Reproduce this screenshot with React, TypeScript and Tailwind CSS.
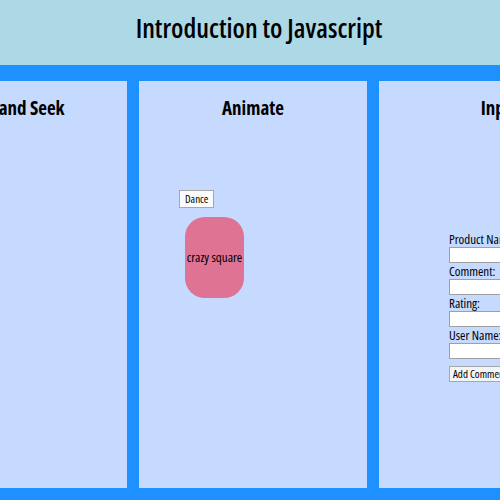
import React from 'react';

const Panel = ({ title, wide, children }: { title: string; wide?: boolean; children?: React.ReactNode }) => (
  <section className={`${wide ? 'w-[250px]' : 'w-[228px]'} shrink-0 bg-[#c6d9ff] flex flex-col`}>
    <h2 className="text-center text-[19px] font-bold text-black pt-[16px] leading-[23px]">{title}</h2>
    {children}
  </section>
);

const Field = ({ label }: { label: string }) => (
  <>
    <label className="block text-[13px] leading-[16px] text-black whitespace-nowrap">{label}</label>
    <input className="block w-[140px] h-[16px] bg-white border border-[#a0a0a0]" />
  </>
);

export default function App() {
  return (
    <div className="w-[500px] h-[500px] overflow-hidden bg-[#1e90ff] font-['Open_Sans',sans-serif] font-stretch-condensed">
      <header className="h-[65px] bg-[#add8e6] flex items-center justify-center">
        <h1 className="text-[26.7px] font-semibold text-black pl-[18px] pb-[9px]">Introduction to Javascript</h1>
      </header>
      <div className="flex gap-[12px] pt-[16px] -ml-[101px] h-[423px]">
        <Panel title="Hide and Seek" />
        <Panel title="Animate">
          <div className="pl-[40px] pt-[65px]">
            <button className="text-[11px] leading-[14px] px-[5px] py-[1px] bg-[#fbfbfb] border border-[#a8a8a8] text-black">
              Dance
            </button>
          </div>
          <div className="ml-[46px] mt-[8px] w-[59px] h-[81px] rounded-[20px] bg-[#de7394] flex items-center justify-center">
            <span className="text-[13px] text-black whitespace-nowrap">crazy square</span>
          </div>
        </Panel>
        <Panel title="Inputs" wide>
          <div className="pl-[70px] pt-[111px] flex flex-col">
            <Field label="Product Name:" />
            <Field label="Comment:" />
            <Field label="Rating:" />
            <Field label="User Name:" />
            <div className="pt-[1px]">
              <button className="text-[11px] leading-[12px] px-[3px] py-[1px] bg-[#f4f4f4] border border-[#a8a8a8] text-black whitespace-nowrap">
                Add Comment
              </button>
            </div>
          </div>
        </Panel>
      </div>
    </div>
  );
}
